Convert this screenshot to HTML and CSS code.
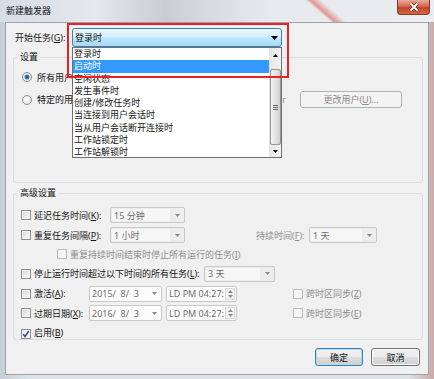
FILE: index.html
```html
<!DOCTYPE html>
<html>
<head>
	<meta charset="utf-8">
	<title>新建触发器</title>
	<link rel="stylesheet" href="styles.css">
</head>
<body>
<div class="win">
	<div class="tb">
		<span class="ttl">新建触发器</span>
		<span class="cls"><svg width="12" height="10" viewBox="0 0 12 10"><path d="M2.5 1.5l7 7M9.5 1.5l-7 7" stroke="#5a2a22" stroke-width="3.4"/><path d="M2.5 1.5l7 7M9.5 1.5l-7 7" stroke="#fff" stroke-width="1.8"/></svg></span>
	</div>
	<div class="client">
		<div class="top">
			<span class="tlbl">开始任务(<u>G</u>):</span>
			<div class="cw">
				<div class="combo"><span class="cv">登录时</span><svg width="7" height="4" viewBox="0 0 7 4"><path d="M0 0h7L3.5 4z"/></svg></div>
				<div class="list">
					<div class="items">
						<div>登录时</div>
						<div class="sel">启动时</div>
						<div>空闲状态</div>
						<div>发生事件时</div>
						<div>创建/修改任务时</div>
						<div>当连接到用户会话时</div>
						<div>当从用户会话断开连接时</div>
						<div>工作站锁定时</div>
						<div>工作站解锁时</div>
					</div>
					<div class="sb">
						<span class="sb-up"><svg width="5" height="3" viewBox="0 0 5 3"><path d="M0 3h5L2.5 0z"/></svg></span>
						<span class="thumb"><svg width="5" height="5" viewBox="0 0 5 5"><path d="M0 .5h5M0 2.5h5M0 4.5h5" stroke="#666"/></svg></span>
						<span class="sb-dn"><svg width="5" height="3" viewBox="0 0 5 3"><path d="M0 0h5L2.5 3z"/></svg></span>
					</div>
				</div>
				<div class="mark"></div>
			</div>
		</div>

		<fieldset class="grp set">
			<legend>设置</legend>
			<div class="r1"><span class="rd on"></span>所有用户(<u>Y</u>)</div>
			<div class="r2"><span class="rd"></span><span>特定的用户(<u>S</u>):</span><span class="who">USER-PC\Administrator</span><span class="btn dis chg">更改用户(<u>U</u>)...</span></div>
		</fieldset>

		<fieldset class="grp adv">
			<legend>高级设置</legend>
			<div class="rows">
				<div class="row">
					<span class="cb"></span><span class="lb w76">延迟任务时间(<u>K</u>):</span>
					<span class="dd w75"><span class="dv">15 分钟</span><svg width="5" height="3" viewBox="0 0 5 3"><path d="M0 0h5L2.5 3z"/></svg></span>
				</div>
				<div class="row">
					<span class="cb"></span><span class="lb w76">重复任务间隔(<u>P</u>):</span>
					<span class="dd w75"><span class="dv">1 小时</span><svg width="5" height="3" viewBox="0 0 5 3"><path d="M0 0h5L2.5 3z"/></svg></span>
					<span class="lb gray dur">持续时间(<u>F</u>):</span>
					<span class="dd w68"><span class="dv">1 天</span><svg width="5" height="3" viewBox="0 0 5 3"><path d="M0 0h5L2.5 3z"/></svg></span>
				</div>
				<div class="row sub">
					<span class="cb dis"></span><span class="gray">重复持续时间结束时停止所有运行的任务(<u>I</u>)</span>
				</div>
				<div class="row">
					<span class="cb"></span><span class="lb w170">停止运行时间超过以下时间的所有任务(<u>L</u>):</span>
					<span class="dd w71"><span class="dv">3 天</span><svg width="5" height="3" viewBox="0 0 5 3"><path d="M0 0h5L2.5 3z"/></svg></span>
				</div>
				<div class="row">
					<span class="cb"></span><span class="lb w55">激活(<u>A</u>):</span>
					<span class="dt"><span class="dv">2015/&nbsp; 8/&nbsp; 3</span><svg width="5" height="3" viewBox="0 0 5 3"><path d="M0 0h5L2.5 3z"/></svg></span>
					<span class="tm"><span class="dv">LD PM 04:27:</span><span class="spin"><svg width="5" height="3" viewBox="0 0 5 3"><path d="M0 3h5L2.5 0z"/></svg><svg width="5" height="3" viewBox="0 0 5 3"><path d="M0 0h5L2.5 3z"/></svg></span></span>
					<span class="cb dis sync"></span><span class="gray">跨时区同步(<u>Z</u>)</span>
				</div>
				<div class="row">
					<span class="cb"></span><span class="lb w55">过期日期(<u>X</u>):</span>
					<span class="dt"><span class="dv">2016/&nbsp; 8/&nbsp; 3</span><svg width="5" height="3" viewBox="0 0 5 3"><path d="M0 0h5L2.5 3z"/></svg></span>
					<span class="tm"><span class="dv">LD PM 04:27:</span><span class="spin"><svg width="5" height="3" viewBox="0 0 5 3"><path d="M0 3h5L2.5 0z"/></svg><svg width="5" height="3" viewBox="0 0 5 3"><path d="M0 0h5L2.5 3z"/></svg></span></span>
					<span class="cb dis sync"></span><span class="gray">跨时区同步(<u>E</u>)</span>
				</div>
				<div class="row last">
					<span class="cb on"><svg width="8" height="8" viewBox="0 0 8 8"><path d="M1.2 4.2l1.9 2.3L6.8 1" fill="none" stroke="#2c3f95" stroke-width="1.4"/></svg></span><span>启用(<u>B</u>)</span>
				</div>
			</div>
		</fieldset>

		<div class="btns">
			<span class="btn def ok">确定</span>
			<span class="btn cancel">取消</span>
		</div>
	</div>
</div>
</body>
</html>
```

FILE: styles.css
```css
body{margin:0;font-family:"Noto Sans","Noto Sans CJK SC",sans-serif;font-size:9px;color:#151515;background:#cdd5de}
u{text-decoration-thickness:1px;text-underline-offset:1px}
svg{display:block;flex:none}

.win{width:434px;height:379px;display:flex;flex-direction:column;background:linear-gradient(to right,#c5ced8,#dde2e8 6%,#dfe3e8 94%,#c9a9aa)}
.tb{height:22px;flex:none;display:flex;align-items:flex-start;background:linear-gradient(41deg,transparent 72%,rgba(226,78,78,.55) 73%,transparent 75.5%),linear-gradient(to right,#d6dde5 0,#e5e8ec 22%,#c8cdd4 38%,#d7dbe0 48%,#e7eaed 62%,#ebedf0 100%)}
.ttl{padding-left:6px;line-height:22px;color:#111}
.cls{margin-left:auto;margin-right:4px;width:33px;height:15px;box-sizing:border-box;border:1px solid #7d3a2f;border-top:none;border-radius:0 0 4px 4px;background:linear-gradient(#e9a99a,#d36a52 45%,#c2452c 55%,#d6643f);display:flex;align-items:center;justify-content:center}

.client{flex:1;margin:0 5px 4px;border:1px solid #9ba4ae;background:#f0f0f0;display:flex;flex-direction:column}

.top{display:flex;align-items:center;height:19px;padding:5px 0 0 9px}
.tlbl{width:57px;flex:none;white-space:nowrap}
.cw{position:relative;width:210px}
.combo{display:flex;align-items:center;height:19px;box-sizing:border-box;border:1px solid #3c7fb1;border-radius:3px;background:linear-gradient(#eaf6fd,#d9f0fc 45%,#bee6fd 52%,#a7d9f5);padding:0 3px 0 2px}
.cv{flex:1}

.list{position:absolute;left:0;top:19px;width:210px;height:111px;box-sizing:border-box;border:1px solid #707070;background:#fff;display:flex;z-index:2}
.items{flex:1}
.items div{height:12.25px;line-height:12.25px;padding-left:1px;white-space:nowrap}
.items .sel{background:#3399ff;color:#fff}
.sb{width:12px;flex:none;background:linear-gradient(to right,#e4e4e4,#f2f2f2);display:flex;flex-direction:column;align-items:center}
.sb-up{height:14px;display:flex;align-items:center}
.sb-dn{height:12px;margin-top:auto;display:flex;align-items:center}
.thumb{margin-top:7px;width:11px;height:76px;box-sizing:border-box;border:1px solid #959595;border-radius:2px;background:linear-gradient(to right,#f3f3f3,#e2e2e2 55%,#cfcfcf);display:flex;align-items:center;justify-content:center}
.mark{position:absolute;left:-5px;top:-5px;width:222px;height:55px;box-sizing:border-box;border:2px solid #ec1f27;z-index:3}

.grp{margin:0 5px 0 7px;padding:0;border:1px solid #d5dfe5;border-radius:3px;min-width:0}
.grp legend{margin-left:4px;padding:0 2px;line-height:12px}
.set{margin-top:4px;padding-bottom:74px}
.adv{margin-top:4px}
.r1{display:flex;align-items:center;height:16px;margin-top:6px;padding-left:8px}
.r2{display:flex;align-items:center;height:17px;margin-top:6px;padding:0 20px 0 8px}
.rd{width:10px;height:10px;box-sizing:border-box;border:1px solid #8e8f8f;border-radius:50%;margin-right:5px;flex:none;background:radial-gradient(circle at 40% 40%,#fff,#d8d8d8)}
.rd.on{background:radial-gradient(circle,#1c4f80 0,#3b7cb6 2px,#e2e2e2 2.8px,#f7f7f7)}
.who{flex:1;text-align:right;white-space:nowrap;overflow:hidden;color:#8493a8}

.rows{display:grid;grid-template-rows:20px 20px 18px 21px 19px 20px 16px;margin-top:6px;padding-left:7px}
.row{display:flex;align-items:center;white-space:nowrap}
.row.sub{padding-left:36px}
.row.last{align-items:flex-end}
.cb{width:10px;height:10px;box-sizing:border-box;flex:none;margin-right:3px;border:1px solid #8e8f8f;background:linear-gradient(135deg,#d6d6d6,#fbfbfb);box-shadow:inset 0 0 0 1px #f3f3f3;display:flex;align-items:center;justify-content:center}
.cb.dis{border-color:#bdbdbd;background:#f4f4f4}
.cb.on{background:linear-gradient(135deg,#e4e4e4,#fdfdfd)}
.cb.sync{margin-left:56px}
.lb{flex:none}
.w76{width:76px}
.w170{width:170px}
.w55{width:55px}
.gray{color:#8e8e8e}
.lb.dur{margin-left:71px;width:53px}

.dd,.dt,.tm{display:flex;align-items:center;height:16px;box-sizing:border-box;border:1px solid #c8c8c8;border-radius:2px;color:#6e6e6e;flex:none;fill:#8a8a8a}
.dd{background:#ededed;padding-right:4px}
.dd .dv{flex:1;align-self:stretch;display:flex;align-items:center;margin:1px 5px 1px 1px;padding-left:2px;background:#f6f6f6}
.w75{width:75px}
.w68{width:68px}
.w71{width:71px}
.dt,.tm{background:#fcfcfc;padding-left:2px}
.dt{width:73px;padding-right:4px}
.dt .dv,.tm .dv{flex:1}
.tm{width:71px;margin-left:4px;padding-right:1px}
.spin{width:10px;height:12px;box-sizing:border-box;border:1px solid #d6d6d6;display:flex;flex-direction:column;align-items:center;justify-content:space-around;background:#f4f4f4}

.btn{display:flex;align-items:center;justify-content:center;height:18px;box-sizing:border-box;border:1px solid #707070;border-radius:3px;background:linear-gradient(#f2f2f2,#ebebeb 50%,#dddddd 51%,#cfcfcf);box-shadow:inset 0 0 0 1px #fbfbfb;flex:none}
.btn.def{border-color:#3c7fb1;box-shadow:inset 0 0 0 1px #a9dbf6}
.btn.dis{border-color:#adb2b5;background:#f4f4f4;box-shadow:none;color:#888}
.chg{width:102px;height:17px;margin-left:14px}
.btns{display:flex;justify-content:flex-end;gap:8px;margin:8px 8px 0 0}
.ok{width:48px}
.cancel{width:49px}
```
